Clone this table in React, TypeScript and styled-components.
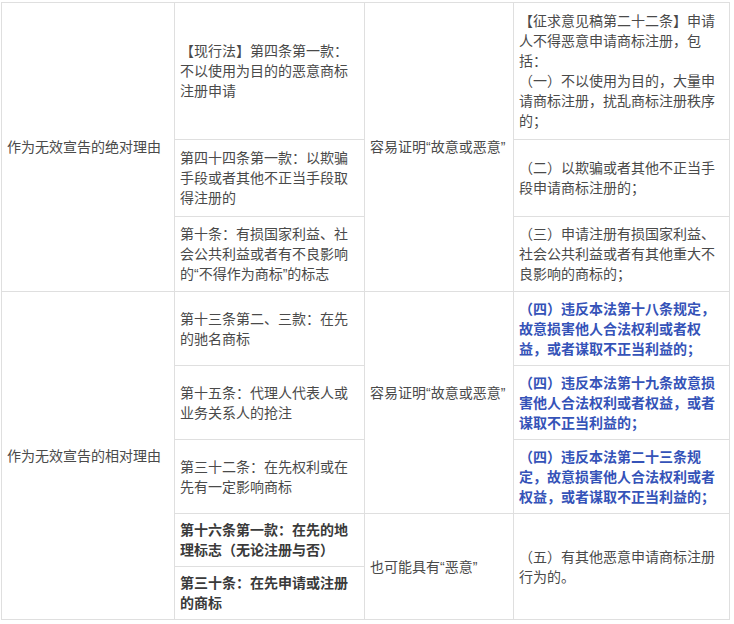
import React from "react";
import styled, { createGlobalStyle } from "styled-components";

const GlobalStyle = createGlobalStyle`
  html, body {
    margin: 0;
    padding: 0;
    background: #ffffff;
  }
  body {
    font-family: "Liberation Sans", "Noto Sans CJK SC", sans-serif;
    font-size: 14px;
    line-height: 20px;
    color: #4a4a4a;
  }
`;

const Page = styled.div`
  padding: 2px 0 0 1px;
`;

const Grid = styled.div`
  display: grid;
  grid-template-columns: 173px 190px 149px 216px;
  grid-template-rows: 137px 77px 75px 74px 74px 74px 53px 53px;
  width: max-content;
  border-top: 1px solid #dfdfdf;
  border-left: 1px solid #dfdfdf;
`;

const Cell = styled.div<{ $col: number; $row: string; $trail?: boolean }>`
  grid-column: ${(p) => p.$col};
  grid-row: ${(p) => p.$row};
  box-sizing: border-box;
  display: flex;
  align-items: center;
  padding: 0 5px ${(p) => (p.$trail ? "20px" : "0")};
  border-right: 1px solid #dfdfdf;
  border-bottom: 1px solid #dfdfdf;
  min-width: 0;
`;

const Text = styled.div<{ $tone?: "plain" | "strong" | "blue"; $nowrap?: boolean }>`
  font-size: 14px;
  line-height: 20px;
  white-space: ${(p) => (p.$nowrap ? "nowrap" : "normal")};
  font-weight: ${(p) => (p.$tone === "strong" || p.$tone === "blue" ? 700 : 400)};
  color: ${(p) =>
    p.$tone === "blue" ? "#3553b8" : p.$tone === "strong" ? "#3a3a3a" : "#4a4a4a"};
`;

export default function App() {
  return (
    <>
      <GlobalStyle />
      <Page>
        <Grid>
          <Cell $col={1} $row="1 / span 3">
            <Text $nowrap>作为无效宣告的绝对理由</Text>
          </Cell>
          <Cell $col={2} $row="1">
            <Text>【现行法】第四条第一款：不以使用为目的的恶意商标注册申请</Text>
          </Cell>
          <Cell $col={3} $row="1 / span 3">
            <Text $nowrap>容易证明“故意或恶意”</Text>
          </Cell>
          <Cell $col={4} $row="1">
            <Text>
              【征求意见稿第二十二条】申请人不得恶意申请商标注册，包括：
              <br />
              （一）不以使用为目的，大量申请商标注册，扰乱商标注册秩序的；
            </Text>
          </Cell>

          <Cell $col={2} $row="2">
            <Text>第四十四条第一款：以欺骗手段或者其他不正当手段取得注册的</Text>
          </Cell>
          <Cell $col={4} $row="2">
            <Text>（二）以欺骗或者其他不正当手段申请商标注册的；</Text>
          </Cell>

          <Cell $col={2} $row="3">
            <Text>第十条：有损国家利益、社会公共利益或者有不良影响的“不得作为商标”的标志</Text>
          </Cell>
          <Cell $col={4} $row="3">
            <Text>（三）申请注册有损国家利益、社会公共利益或者有其他重大不良影响的商标的；</Text>
          </Cell>

          <Cell $col={1} $row="4 / span 5">
            <Text $nowrap>作为无效宣告的相对理由</Text>
          </Cell>
          <Cell $col={2} $row="4">
            <Text>第十三条第二、三款：在先的驰名商标</Text>
          </Cell>
          <Cell $col={3} $row="4 / span 3" $trail>
            <Text $nowrap>容易证明“故意或恶意”</Text>
          </Cell>
          <Cell $col={4} $row="4">
            <Text $tone="blue">
              （四）违反本法第十八条规定，故意损害他人合法权利或者权益，或者谋取不正当利益的；
            </Text>
          </Cell>

          <Cell $col={2} $row="5">
            <Text>第十五条：代理人代表人或业务关系人的抢注</Text>
          </Cell>
          <Cell $col={4} $row="5">
            <Text $tone="blue">
              （四）违反本法第十九条故意损害他人合法权利或者权益，或者谋取不正当利益的；
            </Text>
          </Cell>

          <Cell $col={2} $row="6">
            <Text>第三十二条：在先权利或在先有一定影响商标</Text>
          </Cell>
          <Cell $col={4} $row="6">
            <Text $tone="blue">
              （四）违反本法第二十三条规定，故意损害他人合法权利或者权益，或者谋取不正当利益的；
            </Text>
          </Cell>

          <Cell $col={2} $row="7">
            <Text $tone="strong">第十六条第一款：在先的地理标志（无论注册与否）</Text>
          </Cell>
          <Cell $col={3} $row="7 / span 2">
            <Text $nowrap>也可能具有“恶意”</Text>
          </Cell>
          <Cell $col={4} $row="7 / span 2">
            <Text>（五）有其他恶意申请商标注册行为的。</Text>
          </Cell>

          <Cell $col={2} $row="8">
            <Text $tone="strong">第三十条：在先申请或注册的商标</Text>
          </Cell>
        </Grid>
      </Page>
    </>
  );
}
